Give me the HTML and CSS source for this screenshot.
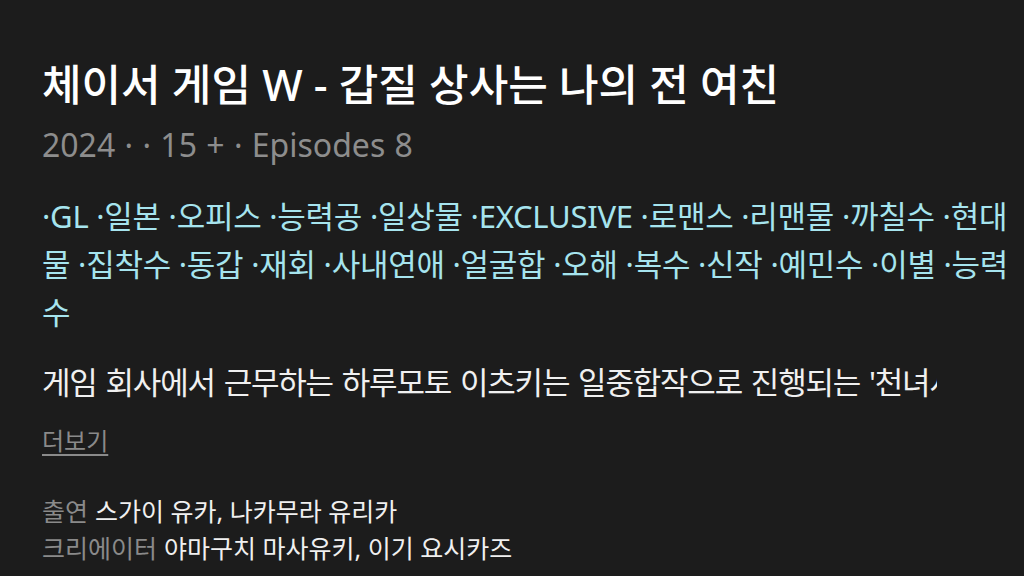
FILE: index.html
```html
<!DOCTYPE html>
<html lang="ko">
<head>
<meta charset="utf-8">
<title>체이서 게임 W - 갑질 상사는 나의 전 여친</title>
<link rel="stylesheet" href="styles.css">
</head>
<body>
<main class="detail">
  <h1 class="title">체이서 게임 W - 갑질 상사는 나의 전 여친</h1>
  <p class="meta">2024 · · 15 + · Episodes 8</p>
  <p class="tags">·GL ·일본 ·오피스 ·능력공 ·일상물 ·EXCLUSIVE ·로맨스 ·리맨물 ·까칠수 ·현대물 ·집착수 ·동갑 ·재회 ·사내연애 ·얼굴합 ·오해 ·복수 ·신작 ·예민수 ·이별 ·능력수</p>
  <p class="synopsis">게임 회사에서 근무하는 하루모토 이츠키는 일중합작으로 진행되는 '천녀사신'의 프로듀서로 발탁되는데, 그곳에서 재회한 것은 고등학교 시절 사귀었던 전 여자친구였다.</p>
  <a class="more" href="#">더보기</a>
  <dl class="credits">
    <div class="credit"><dt>출연</dt><dd>스가이 유카, 나카무라 유리카</dd></div>
    <div class="credit"><dt>크리에이터</dt><dd>야마구치 마사유키, 이기 요시카즈</dd></div>
  </dl>
</main>
</body>
</html>
```
FILE: styles.css
```css
html, body {
  margin: 0;
  background: #1c1c1c;
}

body {
  font-family: "Noto Sans", "Noto Sans CJK KR", sans-serif;
  color: #f2f2f2;
}

.detail {
  padding: 58px 0 0 42px;
}

.title {
  margin: 0;
  font-size: 43px;
  line-height: 54px;
  font-weight: 500;
  color: #ffffff;
}

.meta {
  margin: 11px 0 0;
  font-size: 32px;
  line-height: 44px;
  word-spacing: 1px;
  color: #8d8d8d;
}

.tags {
  margin: 25px 0 0;
  font-size: 31px;
  line-height: 48px;
  letter-spacing: -0.25px;
  color: #a6e4ee;
}

.synopsis {
  margin: 25px 0 0;
  width: 895px;
  font-size: 31px;
  line-height: 42px;
  letter-spacing: -1.2px;
  word-spacing: 2px;
  white-space: nowrap;
  overflow: hidden;
  color: #f0f0f0;
}

.more {
  display: inline-block;
  margin-top: 20px;
  font-size: 24px;
  line-height: 36px;
  color: #8a8a8a;
  text-decoration: underline;
  text-underline-offset: 4px;
}

.credits {
  margin: 34px 0 0;
  font-size: 25px;
  line-height: 37px;
}

.credit {
  display: flex;
  gap: 7px;
}

.credit dt {
  color: #8a8a8a;
}

.credit dd {
  margin: 0;
  color: #f0f0f0;
}
```
